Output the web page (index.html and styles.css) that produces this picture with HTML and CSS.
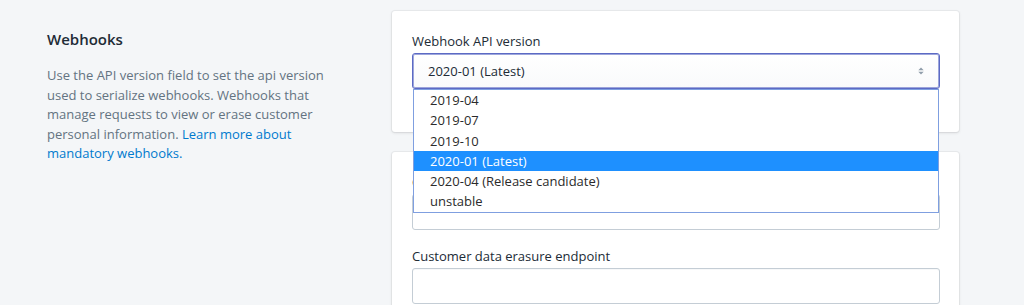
FILE: index.html
```html
<html lang="en">
<head>
    <meta charset="UTF-8">
    <meta name="viewport" content="width=device-width, initial-scale=1.0">
    <title>Webhooks</title>
    <link rel="stylesheet" href="styles.css">
</head>
<body>
    <div class="layout">
        <div class="section-info">
            <h2 class="section-title">Webhooks</h2>
            <p class="section-text">
                Use the API version field to set the api version used to serialize webhooks.
                Webhooks that manage requests to view or erase customer personal information.
                <a href="#">Learn more about mandatory webhooks.</a>
            </p>
        </div>
        <div class="section-cards">
            <div class="card card-version">
                <label class="field-label">Webhook API version</label>
                <div class="select-wrap">
                    <div class="select">
                        <span>2020-01 (Latest)</span>
                        <svg class="select-arrow" width="10" height="10" viewBox="0 0 10 10">
                            <path d="M2.3 4.2L5 1.4l2.7 2.8z M2.3 5.8L5 8.6l2.7-2.8z" fill="#919eab"/>
                        </svg>
                    </div>
                    <!-- open option list -->
                    <ul class="options">
                        <li>2019-04</li>
                        <li>2019-07</li>
                        <li>2019-10</li>
                        <li class="selected">2020-01 (Latest)</li>
                        <li>2020-04 (Release candidate)</li>
                        <li>unstable</li>
                    </ul>
                </div>
            </div>
            <div class="card">
                <div class="field">
                    <label class="field-label">Customer data request endpoint</label>
                    <div class="text-input"></div>
                </div>
                <div class="field">
                    <label class="field-label">Customer data erasure endpoint</label>
                    <div class="text-input"></div>
                </div>
            </div>
        </div>
    </div>
</body>
</html>
```
FILE: styles.css
```css
body {
    margin: 0;
    background-color: #f4f6f8;
    color: #212b36;
    font-family: "Open Sans", "Noto Sans", sans-serif;
    font-size: 13px;
}

.layout {
    display: grid;
    grid-template-columns: 300px 567px;
    column-gap: 45px;
    padding: 11px 0 0 47px;
}

.section-info {
    padding-top: 16px;
}

.section-title {
    margin: 0 0 15px;
    font-size: 15px;
    font-weight: 600;
    line-height: 24px;
}

.section-text {
    margin: 0;
    color: #637381;
    line-height: 19.6px;
}

.section-text a {
    color: #007ace;
    text-decoration: none;
}

.section-cards {
    display: flex;
    flex-direction: column;
    gap: 20px;
}

.card {
    background-color: #fff;
    border-radius: 3px;
    box-shadow: 0 0 0 1px rgba(63, 63, 68, 0.05), 0 1px 3px 0 rgba(63, 63, 68, 0.15);
    padding: 20px 19px 20px 20px;
}

.card-version {
    padding-bottom: 43px;
}

.field-label {
    display: block;
    line-height: 20px;
    margin-bottom: 2px;
}

.field + .field {
    margin-top: 16px;
}

.select-wrap {
    position: relative;
}

.select {
    display: flex;
    align-items: center;
    justify-content: space-between;
    height: 36px;
    box-sizing: border-box;
    padding: 0 13px 0 15px;
    border: 1px solid #5c6ac4;
    border-radius: 3px;
    background: linear-gradient(180deg, #fff, #f9fafb);
    box-shadow: inset 0 0 0 1px rgba(92, 106, 196, 0.6);
}

.options {
    position: absolute;
    top: 100%;
    left: 1px;
    right: 1px;
    z-index: 10;
    margin: 0;
    padding: 0;
    list-style: none;
    background-color: #fff;
    border: 1px solid #7f9fe0;
    color: #2b2b2b;
}

.options li {
    height: 20.3px;
    line-height: 20.3px;
    padding-left: 16px;
}

.options li.selected {
    background-color: #1e90ff;
    color: #fff;
}

.text-input {
    height: 36px;
    box-sizing: border-box;
    border: 1px solid #c4cdd5;
    border-radius: 3px;
    box-shadow: inset 0 1px 0 0 rgba(99, 115, 129, 0.05);
}
```
